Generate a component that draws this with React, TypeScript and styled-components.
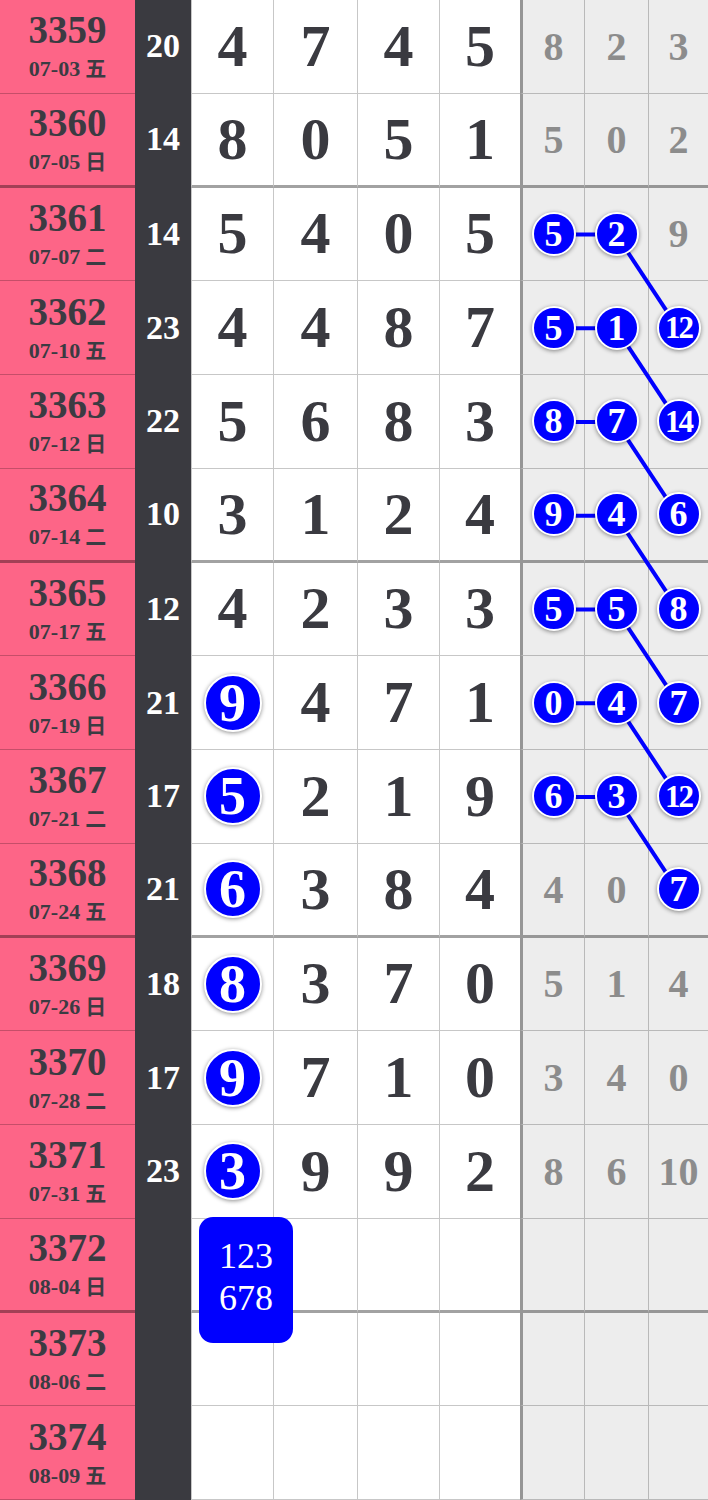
import React from 'react';
import styled, { createGlobalStyle } from 'styled-components';

const GlobalStyle = createGlobalStyle`
  html, body { margin: 0; padding: 0; background: #ffffff; }
  body { font-family: "Liberation Serif", "Noto Sans CJK SC", serif; }
  * { box-sizing: border-box; }
`;

const ROW_H = 93.75;
const BLUE = '#0000ff';
const COLS = '135px 56px 82px 84px 82px 81px 64px 64px 60px';

type RowData = {
  id: number;
  d: string;
  w: string;
  s: number | null;
  m: (number | null)[];
  c0: boolean;
  g: (number | null)[];
  gc: boolean[];
};

const r = (
  id: number, d: string, w: string, s: number | null,
  m: (number | null)[], c0: boolean, g: (number | null)[], gc: number[]
): RowData => ({ id, d, w, s, m, c0, g, gc: gc.map(Boolean) });

const rows: RowData[] = [
  r(3359, '07-03', '五', 20, [4, 7, 4, 5], false, [8, 2, 3], [0, 0, 0]),
  r(3360, '07-05', '日', 14, [8, 0, 5, 1], false, [5, 0, 2], [0, 0, 0]),
  r(3361, '07-07', '二', 14, [5, 4, 0, 5], false, [5, 2, 9], [1, 1, 0]),
  r(3362, '07-10', '五', 23, [4, 4, 8, 7], false, [5, 1, 12], [1, 1, 1]),
  r(3363, '07-12', '日', 22, [5, 6, 8, 3], false, [8, 7, 14], [1, 1, 1]),
  r(3364, '07-14', '二', 10, [3, 1, 2, 4], false, [9, 4, 6], [1, 1, 1]),
  r(3365, '07-17', '五', 12, [4, 2, 3, 3], false, [5, 5, 8], [1, 1, 1]),
  r(3366, '07-19', '日', 21, [9, 4, 7, 1], true, [0, 4, 7], [1, 1, 1]),
  r(3367, '07-21', '二', 17, [5, 2, 1, 9], true, [6, 3, 12], [1, 1, 1]),
  r(3368, '07-24', '五', 21, [6, 3, 8, 4], true, [4, 0, 7], [0, 0, 1]),
  r(3369, '07-26', '日', 18, [8, 3, 7, 0], true, [5, 1, 4], [0, 0, 0]),
  r(3370, '07-28', '二', 17, [9, 7, 1, 0], true, [3, 4, 0], [0, 0, 0]),
  r(3371, '07-31', '五', 23, [3, 9, 9, 2], true, [8, 6, 10], [0, 0, 0]),
  r(3372, '08-04', '日', null, [null, null, null, null], false, [null, null, null], [0, 0, 0]),
  r(3373, '08-06', '二', null, [null, null, null, null], false, [null, null, null], [0, 0, 0]),
  r(3374, '08-09', '五', null, [null, null, null, null], false, [null, null, null], [0, 0, 0]),
];

const Table = styled.div`
  position: relative;
  width: 708px;
  height: 1500px;
  display: flex;
  flex-direction: column;
  overflow: hidden;
`;

const Row = styled.div<{ $thick: boolean }>`
  display: grid;
  grid-template-columns: ${COLS};
  height: ${ROW_H}px;
  flex: none;
  & > * {
    border-bottom: ${(p) => (p.$thick ? '3px solid rgba(0,0,0,0.36)' : '1px solid rgba(0,0,0,0.22)')};
  }
`;

const IssueCell = styled.div`
  background: #fd6587;
  color: #3b3b42;
  font-weight: 700;
  display: flex;
  flex-direction: column;
  align-items: center;
  justify-content: center;
`;

const IssueNo = styled.div`
  font-size: 39px;
  line-height: 44px;
`;

const IssueDate = styled.div`
  font-size: 22px;
  line-height: 30px;
  white-space: nowrap;
  & span {
    font-family: "Noto Sans CJK SC", sans-serif;
    font-weight: 700;
    font-size: 21px;
    margin-left: 5px;
  }
`;

const SumCell = styled.div`
  background: #3a3a40;
  color: #ffffff;
  font-weight: 700;
  font-size: 34px;
  display: flex;
  align-items: center;
  justify-content: center;
  border-bottom-color: #3a3a40 !important;
`;

const MainCell = styled.div`
  position: relative;
  background: #ffffff;
  border-left: 1px solid rgba(0,0,0,0.22);
  color: #3a3a40;
  font-weight: 700;
  font-size: 60px;
  display: flex;
  align-items: center;
  justify-content: center;
`;

const SideCell = styled.div<{ $first: boolean }>`
  background: #ededed;
  border-left: ${(p) => (p.$first ? '3px solid rgba(0,0,0,0.36)' : '1px solid rgba(0,0,0,0.22)')};
  color: #8c8c8c;
  font-weight: 700;
  font-size: 40px;
  display: flex;
  align-items: center;
  justify-content: center;
`;

const Ball = styled.div<{ $size: number; $font: number; $two?: boolean }>`
  position: relative;
  z-index: 2;
  width: ${(p) => p.$size}px;
  height: ${(p) => p.$size}px;
  border-radius: 50%;
  background: ${BLUE};
  border: 2px solid #ffffff;
  box-shadow: 0 1px 4px rgba(0,0,0,0.45);
  color: #ffffff;
  font-weight: 700;
  font-size: ${(p) => p.$font}px;
  letter-spacing: ${(p) => (p.$two ? '-2px' : '0')};
  display: flex;
  align-items: center;
  justify-content: center;
  line-height: 1;
`;

const Pick = styled.div`
  position: absolute;
  z-index: 3;
  left: 7px;
  top: -2px;
  width: 94px;
  height: 126px;
  border-radius: 14px;
  background: ${BLUE};
  color: #ffffff;
  font-weight: 400;
  font-size: 36px;
  line-height: 42px;
  display: flex;
  flex-direction: column;
  align-items: center;
  justify-content: center;
  padding-bottom: 6px;
`;

const Links = styled.svg`
  position: absolute;
  left: 0;
  top: 0;
  z-index: 1;
  pointer-events: none;
`;

const X1 = 553;
const X2 = 616;
const X3 = 678;
const yc = (i: number) => ROW_H * i + ROW_H / 2;

export default function App() {
  const segs: { x1: number; y1: number; x2: number; y2: number }[] = [];
  rows.forEach((row, i) => {
    if (row.gc[0] && row.gc[1]) segs.push({ x1: X1, y1: yc(i), x2: X2, y2: yc(i) });
    const next = rows[i + 1];
    if (next && row.gc[1] && next.gc[2]) segs.push({ x1: X2, y1: yc(i), x2: X3, y2: yc(i + 1) });
  });

  return (
    <>
      <GlobalStyle />
      <Table>
        {rows.map((row, i) => (
          <Row key={row.id} $thick={i % 4 === 1}>
            <IssueCell>
              <IssueNo>{row.id}</IssueNo>
              <IssueDate>
                {row.d}
                <span>{row.w}</span>
              </IssueDate>
            </IssueCell>
            <SumCell>{row.s ?? ''}</SumCell>
            {row.m.map((v, k) => (
              <MainCell key={k}>
                {k === 0 && row.c0 && v !== null ? (
                  <Ball $size={58} $font={54}>{v}</Ball>
                ) : (
                  v ?? ''
                )}
                {k === 0 && row.id === 3372 && (
                  <Pick>
                    <div>123</div>
                    <div>678</div>
                  </Pick>
                )}
              </MainCell>
            ))}
            {row.g.map((v, k) => (
              <SideCell key={k} $first={k === 0}>
                {row.gc[k] && v !== null ? (
                  <Ball $size={44} $font={v >= 10 ? 31 : 36} $two={v >= 10}>{v}</Ball>
                ) : (
                  v ?? ''
                )}
              </SideCell>
            ))}
          </Row>
        ))}
        <Links width={708} height={1500} viewBox="0 0 708 1500">
          {segs.map((s, k) => (
            <line key={k} x1={s.x1} y1={s.y1} x2={s.x2} y2={s.y2} stroke={BLUE} strokeWidth={4} />
          ))}
        </Links>
      </Table>
    </>
  );
}
